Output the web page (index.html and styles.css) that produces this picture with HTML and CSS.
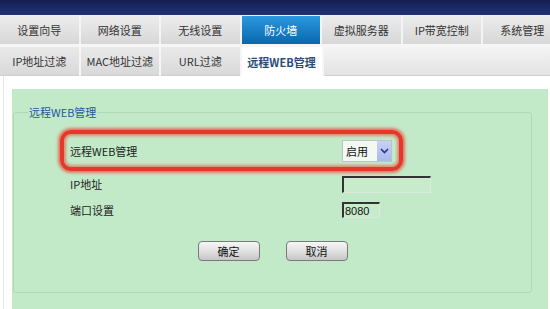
FILE: index.html
```html
<!DOCTYPE html>
<html lang="zh-CN">
<head>
    <meta charset="UTF-8">
    <meta name="viewport" content="width=device-width, initial-scale=1.0">
    <title>防火墙 - 远程WEB管理</title>

    <link rel="stylesheet" href="styles.css">
</head>

<body>

    <div class="topbar"></div>

    <div class="menu">
        <div class="tab">设置向导</div>
        <div class="tab">网络设置</div>
        <div class="tab">无线设置</div>
        <div class="tab active">防火墙</div>
        <div class="tab">虚拟服务器</div>
        <div class="tab">IP带宽控制</div>
        <div class="tab">系统管理</div>
    </div>

    <div class="submenu">
        <div class="subtab">IP地址过滤</div>
        <div class="subtab">MAC地址过滤</div>
        <div class="subtab">URL过滤</div>
        <div class="subtab current">远程WEB管理</div>
        <div class="filler"></div>
    </div>

    <div class="content">
        <div class="panel">
            <fieldset class="box">
                <legend>远程WEB管理</legend>

                <div class="row highlight">
                    <span class="label">远程WEB管理</span>
                    <div class="select">
                        <span class="select-value">启用</span>
                        <span class="select-arrow">
                            <svg width="9" height="6" viewBox="0 0 9 6"><path d="M1 1 L4.5 4.5 L8 1" fill="none" stroke="#1f3a8a" stroke-width="1.6"/></svg>
                        </span>
                    </div>
                </div>

                <div class="row">
                    <span class="label">IP地址</span>
                    <input class="field ip" type="text" value="">
                </div>

                <div class="row">
                    <span class="label">端口设置</span>
                    <input class="field port" type="text" value="8080">
                </div>

                <div class="actions">
                    <button class="btn">确定</button>
                    <button class="btn">取消</button>
                </div>
            </fieldset>
        </div>
    </div>

</body>
</html>
```

FILE: styles.css
```css
*{
    margin: 0;
    padding: 0;
    box-sizing: border-box;
}

body{
    background: #fff;
    font-family: "Noto Sans CJK SC", "Noto Sans", sans-serif;
    font-size: 11px;
    color: #222;
    overflow: hidden;
}

.topbar{
    height: 16px;
    background: linear-gradient(#142050, #203274);
    border-bottom: 1px solid #f0f0f0;
}

/* main menu */

.menu{
    display: flex;
    gap: 2px;
    height: 28px;
    overflow: hidden;
    background: #f4f4f4;
}

.tab{
    flex: 0 0 78.5px;
    display: flex;
    justify-content: center;
    align-items: center;
    background: linear-gradient(#ececec, #d7d7d7);
    color: #333;
    font-size: 11px;
}

.tab.active{
    background: linear-gradient(#2c98de, #0a67ad);
    color: #fff;
}

/* sub menu */

.submenu{
    display: flex;
    gap: 2px;
    height: 32px;
    padding-top: 3px;
    overflow: hidden;
    background: #f6f6f6;
}

.subtab{
    flex: 0 0 78.5px;
    display: flex;
    justify-content: center;
    align-items: center;
    background: linear-gradient(#e9e9e9, #d9d9d9);
    border-bottom: 1px solid #cfcfcf;
    color: #333;
    font-size: 11px;
}

.subtab.current{
    flex-basis: 80px;
    background: #fff;
    border-bottom: none;
    color: #2a4d72;
    font-weight: 600;
}

.filler{
    flex: 1;
    background: linear-gradient(#f4f4f4, #e3e3e3);
    border-bottom: 1px solid #cfcfcf;
}

/* content */

.content{
    margin-left: 3px;
    border-left: 1px solid #e6e6e6;
    padding: 13px 2px 0 8px;
}

.panel{
    background: #c3eac8;
    height: 220px;
    padding-top: 15px;
}

.box{
    margin: 0 16px 0 1px;
    border: 1px solid #b2d8b7;
    border-radius: 3px;
    padding: 10px 0 31px 0;
}

.box legend{
    margin-left: 14px;
    padding: 0 1px;
    line-height: 16px;
    color: #2456a0;
    font-size: 11px;
}

.row{
    display: flex;
    align-items: center;
    height: 26px;
    margin-left: 46px;
    padding-left: 10px;
}

.row.highlight{
    width: 343px;
    height: 41px;
    padding-left: 6px;
    border: 4px solid #e6372b;
    border-radius: 11px;
    box-shadow: 0 0 3px 2px rgba(232, 60, 45, 0.65), inset 0 0 3px 2px rgba(232, 60, 45, 0.55);
}

.label{
    flex: 0 0 272px;
    font-size: 11px;
    color: #1d1d1d;
}

.select{
    display: flex;
    width: 50px;
    height: 22px;
    border: 1px solid #b9c4cc;
    background: #f4f8f2;
}

.select-value{
    flex: 1;
    padding-left: 3px;
    line-height: 20px;
    font-size: 11px;
    color: #111;
}

.select-arrow{
    width: 14px;
    display: flex;
    justify-content: center;
    align-items: center;
    background: linear-gradient(#c9d2f5, #aab8ec);
}

.field{
    height: 17px;
    border: 1px solid #dbe8da;
    border-top: 2px solid #333;
    border-left: 2px solid #333;
    background: #c8ebcb;
    font-family: "Liberation Sans", sans-serif;
    font-size: 11px;
    color: #111;
    padding-left: 1px;
    outline: none;
}

.ip{
    width: 89px;
}

.port{
    width: 38px;
    height: 16px;
}

.actions{
    display: flex;
    justify-content: center;
    gap: 26px;
    margin-top: 18px;
}

.btn{
    width: 62px;
    height: 20px;
    border: 1px solid #7a7a7a;
    border-radius: 4px;
    background: linear-gradient(#f7f7f7, #dedede 55%, #c6c6c6);
    font-family: "Noto Sans CJK SC", sans-serif;
    font-size: 11px;
    color: #111;
}
```
